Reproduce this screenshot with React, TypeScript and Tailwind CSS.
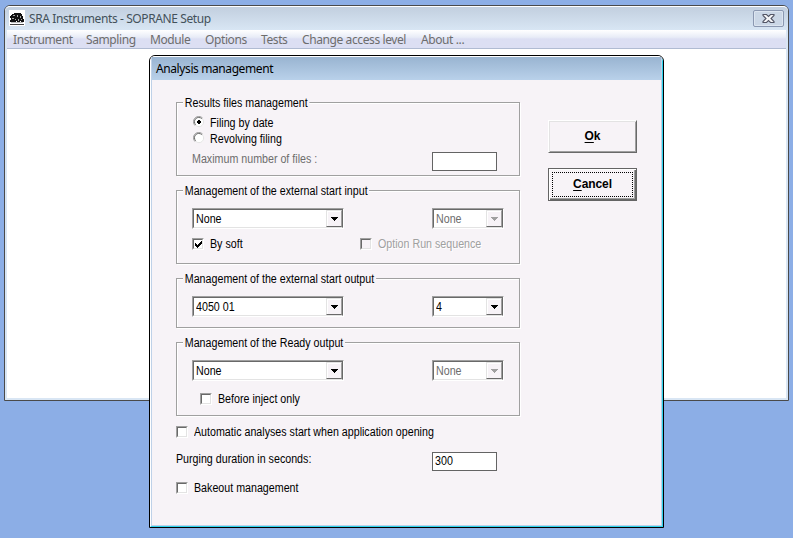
import type { ReactNode } from "react";

const sans = "font-['Liberation_Sans',Arial,sans-serif]";
const ui = "font-['Noto_Sans','Open_Sans',sans-serif] tracking-[-0.4px]";

function Label({ children, className = "" }: { children: ReactNode; className?: string }) {
  return (
    <span
      className={`block w-fit origin-left scale-x-[0.89] whitespace-nowrap text-[12px] leading-[14px] ${sans} ${className}`}
    >
      {children}
    </span>
  );
}

function ButtonText({ hotkey, rest }: { hotkey: string; rest: string }) {
  return (
    <span className={`text-[12px] leading-[14px] font-bold tracking-[-0.1px] ${sans}`}>
      <span className="underline underline-offset-2">{hotkey}</span>
      {rest}
    </span>
  );
}

function Group({ title, className = "", children }: { title: string; className?: string; children: ReactNode }) {
  return (
    <section
      className={`flex w-[344px] shrink-0 flex-col border border-[#a0a0a0] shadow-[1px_1px_0_#fff,inset_1px_1px_0_#fff] ${className}`}
    >
      <div className="-mt-[7px] mb-[-1px] ml-[6px] h-[16px] w-fit">
        <Label className="bg-[#f7f3f7] px-[2px]">{title}</Label>
      </div>
      {children}
    </section>
  );
}

function Combo({ value, className, disabled = false }: { value: string; className: string; disabled?: boolean }) {
  return (
    <div
      className={`flex h-[21px] shrink-0 border border-t-[#a0a0a0] border-r-white border-b-white border-l-[#a0a0a0] ${className}`}
    >
      <div className="flex min-w-0 flex-1 border border-t-[#696969] border-r-[#696969] border-b-[#e3e3e3] border-l-[#696969] bg-white">
        <div className={`min-w-0 flex-1 pt-[2px] pl-[2px] ${disabled ? "text-[#6d6d6d]" : "text-black"}`}>
          <Label>{value}</Label>
        </div>
        <div className="flex w-[16px] items-center justify-center border-t border-r border-b border-l border-t-[#e3e3e3] border-r-[#a0a0a0] border-b-[#696969] border-l-[#e3e3e3] bg-[#f7f3f7] shadow-[inset_1px_1px_0_#fff]">
          <svg width="7" height="4" shapeRendering="crispEdges" fill={disabled ? "#a0a0a0" : "#000"}>
            <path d="M0 0h7v1H0zM1 1h5v1H1zM2 2h3v1H2zM3 3h1v1H3z" />
          </svg>
        </div>
      </div>
    </div>
  );
}

function Check({ checked = false, disabled = false }: { checked?: boolean; disabled?: boolean }) {
  return (
    <span className="block size-[12px] shrink-0 border border-t-[#a0a0a0] border-r-white border-b-white border-l-[#a0a0a0]">
      <span
        className={`block size-[10px] border border-t-[#696969] border-r-[#e3e3e3] border-b-[#e3e3e3] border-l-[#696969] ${disabled ? "bg-[#f7f3f7]" : "bg-white"}`}
      >
        {checked && (
          <svg width="8" height="8" shapeRendering="crispEdges">
            <path d="M1 3h1v3H1zM2 4h1v3H2zM3 5h1v3H3zM4 4h1v3H4zM5 3h1v3H5zM6 2h1v3H6zM7 1h1v3H7z" />
          </svg>
        )}
      </span>
    </span>
  );
}

function Radio({ checked = false }: { checked?: boolean }) {
  return (
    <svg width="12" height="12" viewBox="0 0 12 12" className="shrink-0">
      <circle cx="6" cy="6" r="5" fill="#fff" />
      <path d="M2 9.6A5.2 5.2 0 0 1 9.6 2" fill="none" stroke="#a0a0a0" />
      <path d="M2.7 8.8A4.2 4.2 0 0 1 8.8 2.7" fill="none" stroke="#696969" />
      <path d="M2.7 9.3A4.4 4.4 0 0 0 9.3 2.7" fill="none" stroke="#e3e3e3" />
      {checked && <path d="M5 4h2v1h1v2H7v1H5V7H4V5h1z" fill="#000" shapeRendering="crispEdges" />}
    </svg>
  );
}

function TextBox({ value = "" }: { value?: string }) {
  return (
    <div className="h-[19px] w-[65px] shrink-0 border border-[#646464] bg-white pt-[1px] pl-[2px]">
      <Label>{value}</Label>
    </div>
  );
}

const menu = [
  { name: "Instrument", width: "w-[73px]" },
  { name: "Sampling", width: "w-[64px]" },
  { name: "Module", width: "w-[55px]" },
  { name: "Options", width: "w-[56px]" },
  { name: "Tests", width: "w-[41px]" },
  { name: "Change access level", width: "w-[119px]" },
  { name: "About ...", width: "w-[60px]" },
];

function MainWindow() {
  return (
    <div className="absolute top-[5px] left-[4px] flex h-[396px] w-[785px] flex-col rounded-t-[6px] border border-[#4a4a4a] bg-[#d9e6f4]">
      <div className="flex h-[24px] shrink-0 items-start rounded-t-[5px] border-t border-white bg-linear-to-b from-[#c2cfdf] to-[#d8e6f4] pr-[4px] pl-[4px]">
        <svg width="16" height="16" viewBox="0 0 16 16" className="mt-[3px] shrink-0" shapeRendering="crispEdges">
          <path d="M0 0h16v16H0z" fill="#fff" />
          <path
            d="M3 4h2V3h7v1h1v2h1v3h1v3h-3v-1h-1v1H8v-1H7v1H1v-2h1V8H1V6h1V5h1z"
            fill="#111"
          />
          <path
            d="M4 5h2v1H4zM3 8h2v1H3zM8 5h1v2H8zM6 9h1v1H6zM9 9h1v2H9zM11 6h1v2h-1zM12 9h1v1h-1z"
            fill="#a8a8a8"
          />
          <path d="M2 12h12v1H2z" fill="#bbb" />
          <path d="M1 14h14v1H1z" fill="#444" />
        </svg>
        <span className={`mt-[3px] ml-[4px] flex-1 text-[12px] leading-[18px] whitespace-nowrap text-[#43515a] ${ui}`}>
          SRA Instruments - SOPRANE Setup
        </span>
        <div className="mt-[3px] flex h-[17px] w-[31px] items-center justify-center rounded-[2px] border border-[#8b98b1] bg-[#cbd7e6] shadow-[inset_0_0_0_1px_#dce5f0]">
          <svg width="13" height="11" viewBox="0 0 13 11">
            <path
              d="M1 1.5h3.5l2 2 2-2H12v1L9 5.5l3 3v1H8.5l-2-2-2 2H1v-1l3-3-3-3z"
              fill="#f5f6f8"
              stroke="#535666"
              strokeWidth="1.1"
            />
          </svg>
        </div>
      </div>
      <div className="mx-[2px] mb-[2px] flex flex-1 flex-col bg-white">
        <nav
          className={`flex h-[19px] shrink-0 border-b border-[#b0bbd2] bg-linear-to-b from-white from-0% via-[#e8ecf7] via-40% to-[#dcdff3] to-50% pl-[6px] text-[12px] leading-[20px] text-[#6d6d6d] ${ui}`}
        >
          {menu.map((m) => (
            <span key={m.name} className={`shrink-0 whitespace-nowrap ${m.width}`}>
              {m.name}
            </span>
          ))}
        </nav>
      </div>
    </div>
  );
}

function Dialog() {
  return (
    <div className="absolute top-[55px] left-[149px] flex h-[473px] w-[515px] flex-col overflow-hidden rounded-t-[6px] border border-black bg-[#f7f3f7]">
      <div className="flex flex-1 flex-col rounded-t-[5px] border border-t-white border-r-[#2bd3ec] border-b-[#2bd3ec] border-l-white">
        <div className="flex flex-1 flex-col border-r border-b border-l border-[#bed1e8]">
          <header
            className={`h-[23px] shrink-0 bg-linear-to-b from-[#99b4d1] to-[#b9d1ea] pl-[4px] text-[12px] leading-[24px] text-black ${ui}`}
          >
            Analysis management
          </header>
          <div className="flex flex-1 pt-[22px] pl-[24px] text-black">
            <div className="flex w-[344px] flex-col">
              <Group title="Results files management" className="h-[74px]">
                <div className="ml-[16px] flex h-[16px] items-center pt-[6px]">
                  <Radio checked />
                  <Label className="mt-[2px] ml-[5px]">Filing by date</Label>
                </div>
                <div className="ml-[16px] flex h-[16px] items-center pt-[6px]">
                  <Radio />
                  <Label className="mt-[2px] ml-[5px]">Revolving filing</Label>
                </div>
                <div className="mt-[9px] ml-[15px] flex">
                  <div className="w-[240px] text-[#6d6d6d]">
                    <Label>Maximum number of files :</Label>
                  </div>
                  <TextBox />
                </div>
              </Group>

              <Group title="Management of the external start input" className="mt-[14px] h-[74px]">
                <div className="mt-[9px] ml-[15px] flex justify-between pr-[15px]">
                  <Combo value="None" className="w-[152px]" />
                  <Combo value="None" className="w-[72px]" disabled />
                </div>
                <div className="mt-[8px] ml-[15px] flex items-center">
                  <Check checked />
                  <div className="ml-[6px] w-[150px]">
                    <Label>By soft</Label>
                  </div>
                  <Check disabled />
                  <Label className="ml-[6px] text-[#a0a0a0] [text-shadow:1px_1px_0_#fff]">Option Run sequence</Label>
                </div>
              </Group>

              <Group title="Management of the external start output" className="mt-[14px] h-[50px]">
                <div className="mt-[9px] ml-[15px] flex justify-between pr-[15px]">
                  <Combo value="4050 01" className="w-[152px]" />
                  <Combo value="4" className="w-[72px]" />
                </div>
              </Group>

              <Group title="Management of the Ready output" className="mt-[14px] h-[74px]">
                <div className="mt-[9px] ml-[15px] flex justify-between pr-[15px]">
                  <Combo value="None" className="w-[152px]" />
                  <Combo value="None" className="w-[72px]" disabled />
                </div>
                <div className="mt-[10px] ml-[23px] flex items-center">
                  <Check />
                  <Label className="mt-[1px] ml-[6px]">Before inject only</Label>
                </div>
              </Group>

              <div className="mt-[9px] flex items-center">
                <Check />
                <Label className="ml-[6px]">Automatic analyses start when application opening</Label>
              </div>
              <div className="mt-[13px] flex">
                <div className="w-[256px]">
                  <Label>Purging duration in seconds:</Label>
                </div>
                <TextBox value="300" />
              </div>
              <div className="mt-[10px] flex items-center">
                <Check />
                <Label className="ml-[6px]">Bakeout management</Label>
              </div>
            </div>

            <div className="ml-[28px] flex flex-col gap-[15px] pt-[18px]">
              <button className="flex h-[33px] w-[89px] items-center justify-center border border-t-white border-r-[#696969] border-b-[#696969] border-l-white bg-[#f7f3f7] pb-[1px] shadow-[inset_1px_1px_0_#e3e3e3,inset_-1px_-1px_0_#a0a0a0]">
                <ButtonText hotkey="O" rest="k" />
              </button>
              <button className="h-[33px] w-[89px] border border-[#646464] bg-[#f7f3f7] p-[3px] shadow-[inset_1px_1px_0_#fff,inset_-1px_-1px_0_#696969,inset_-2px_-2px_0_#a0a0a0]">
                <span className="flex h-full w-full items-center justify-center border border-dotted border-black pb-[1px]">
                  <ButtonText hotkey="C" rest="ancel" />
                </span>
              </button>
            </div>
          </div>
        </div>
      </div>
    </div>
  );
}

export default function App() {
  return (
    <main className="relative h-[538px] w-[793px] overflow-hidden bg-[#8caee6]">
      <MainWindow />
      <Dialog />
    </main>
  );
}
